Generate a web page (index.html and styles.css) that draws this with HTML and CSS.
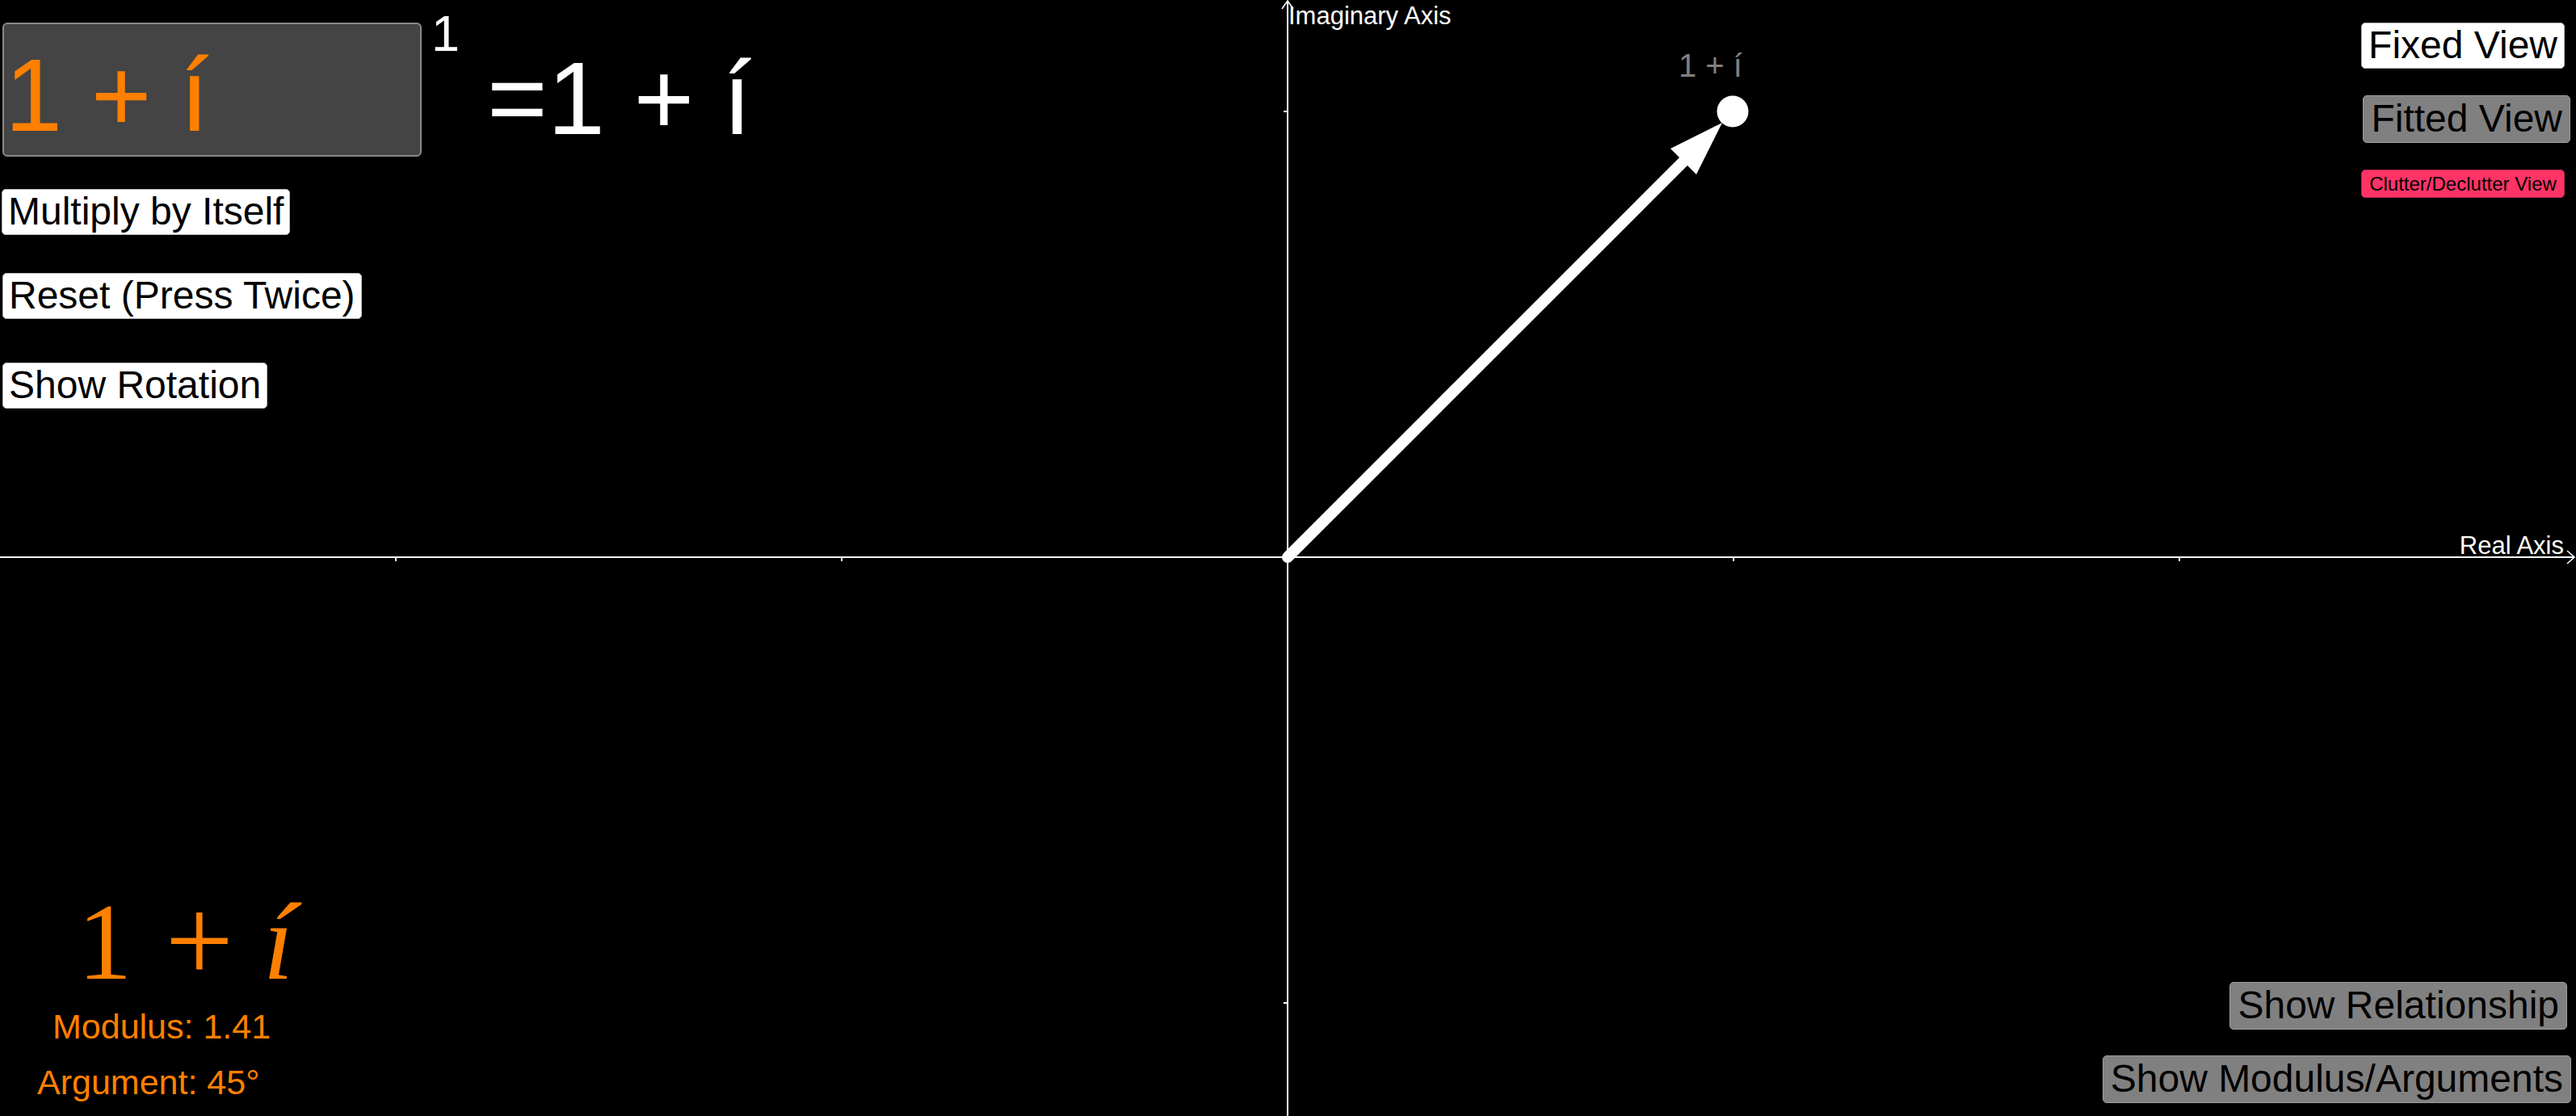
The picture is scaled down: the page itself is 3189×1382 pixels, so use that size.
FILE: index.html
```html
<!DOCTYPE html>
<html lang="en">
<head>
<meta charset="utf-8">
<title>Complex Multiplication</title>
<link rel="stylesheet" href="styles.css">
</head>
<body>
<main class="stage">
  <svg class="graph" viewBox="0 0 3189 1382" width="3189" height="1382" xmlns="http://www.w3.org/2000/svg">
    <g class="axes">
      <line x1="0" y1="690" x2="3187" y2="690"/>
      <polyline class="axis-head" points="3178,682 3187,690 3178,698"/>
      <line x1="1594" y1="1382" x2="1594" y2="1"/>
      <polyline class="axis-head" points="1587,11 1594,1 1601,11"/>
      <line x1="490" y1="690" x2="490" y2="695"/>
      <line x1="1042" y1="690" x2="1042" y2="695"/>
      <line x1="2146" y1="690" x2="2146" y2="695"/>
      <line x1="2698" y1="690" x2="2698" y2="695"/>
      <line x1="1589" y1="138" x2="1594" y2="138"/>
      <line x1="1589" y1="1242" x2="1594" y2="1242"/>
    </g>
    <text class="axis-label" x="1595" y="30">Imaginary Axis</text>
    <text class="axis-label" x="3174" y="686" text-anchor="end">Real Axis</text>
    <line class="vector" x1="1594" y1="690" x2="2090" y2="194"/>
    <polygon class="vector-head" points="2132,152 2068,184 2100,216"/>
    <circle class="point" cx="2145" cy="138" r="19.5"/>
    <text class="point-label" x="2078" y="95">1 + í</text>
  </svg>

  <section class="panel-left">
    <div class="expr-row">
      <div class="input-box">1 + í</div>
      <div class="power">1</div>
      <div class="result">=1 + í</div>
    </div>
    <button class="btn btn-white btn-multiply">Multiply by Itself</button>
    <button class="btn btn-white btn-reset">Reset (Press Twice)</button>
    <button class="btn btn-white btn-rotation">Show Rotation</button>
  </section>

  <section class="panel-right">
    <button class="btn btn-white btn-fixed">Fixed View</button>
    <button class="btn btn-gray btn-fitted">Fitted View</button>
    <button class="btn btn-pink">Clutter/Declutter View</button>
  </section>

  <section class="panel-bottom-left">
    <div class="math"><span class="num">1</span><span class="op">+</span><i class="imag">í</i></div>
    <div class="stat modulus">Modulus: 1.41</div>
    <div class="stat argument">Argument: 45°</div>
  </section>

  <section class="panel-bottom-right">
    <button class="btn btn-gray btn-relationship">Show Relationship</button>
    <button class="btn btn-gray btn-modarg">Show Modulus/Arguments</button>
  </section>
</main>
</body>
</html>
```
FILE: styles.css
```css
* { box-sizing: border-box; }

html, body {
  margin: 0;
  padding: 0;
  background: #000;
}

body {
  font-family: "Liberation Sans", Arial, sans-serif;
  color: #fff;
  overflow: hidden;
}

.stage {
  display: grid;
  width: 3189px;
  height: 1382px;
  grid-template-columns: 1fr 1fr;
  grid-template-rows: 1fr 1fr;
}

/* ---------- graph canvas ---------- */
.graph {
  grid-area: 1 / 1 / 3 / 3;
  display: block;
}

.axes line {
  stroke: #fff;
  stroke-width: 2;
}

.axis-head {
  fill: none;
  stroke: #fff;
  stroke-width: 1.6;
}

.axis-label {
  font-family: "Liberation Sans", Arial, sans-serif;
  font-size: 31px;
  fill: #fff;
}

.vector {
  stroke: #fff;
  stroke-width: 14;
  stroke-linecap: round;
}

.vector-head,
.point {
  fill: #fff;
}

.point-label {
  font-family: "Liberation Sans", Arial, sans-serif;
  font-size: 40px;
  fill: #808080;
}

/* ---------- buttons ---------- */
.btn {
  font-family: "Liberation Sans", Arial, sans-serif;
  font-size: 48px;
  line-height: 53px;
  color: #000;
  margin: 0;
  padding: 0 7px 2px;
  border: 1px solid #b8b8b8;
  border-radius: 5px;
  white-space: nowrap;
  cursor: pointer;
}

.btn-white { background: #fff; }

.btn-gray {
  background: #808080;
  border-color: #a0a0a0;
  padding: 1px 9px 3px;
}

.btn-pink {
  background: #ff3366;
  border-color: #b82a50;
  font-size: 24px;
  line-height: 27px;
  padding: 3px 0;
  width: 252px;
}

/* ---------- top-left panel ---------- */
.panel-left {
  grid-area: 1 / 1 / 2 / 2;
  align-self: start;
  justify-self: start;
  display: flex;
  flex-direction: column;
  align-items: flex-start;
}

.expr-row {
  display: flex;
  align-items: flex-start;
}

.input-box {
  margin: 28px 0 0 3px;
  width: 519px;
  height: 166px;
  border: 2px solid #8a8a8a;
  border-radius: 6px;
  background: #444;
  color: #ff8000;
  font-size: 128px;
  line-height: 1;
  padding: 24px 0 0 1px;
  white-space: nowrap;
}

.power {
  margin: 10px 0 0 12px;
  font-size: 63px;
  line-height: 1;
}

.result {
  margin: 58px 0 0 34px;
  font-size: 128px;
  line-height: 1;
  white-space: nowrap;
}

.btn-multiply { margin: 40px 0 0 2px; }
.btn-reset    { margin: 47px 0 0 3px; }
.btn-rotation { margin: 54px 0 0 3px; }

/* ---------- top-right panel ---------- */
.panel-right {
  grid-area: 1 / 2 / 2 / 3;
  align-self: start;
  justify-self: end;
  display: flex;
  flex-direction: column;
  align-items: flex-end;
}

.btn-fixed  { margin: 28px 14px 0 0; padding: 0 8px 2px; }
.btn-fitted { margin: 33px 7px 0 0; }
.btn-pink   { margin: 33px 14px 0 0; }

/* ---------- bottom-left panel ---------- */
.panel-bottom-left {
  grid-area: 2 / 1 / 3 / 2;
  align-self: end;
  justify-self: start;
  display: flex;
  flex-direction: column;
  align-items: flex-start;
  padding-bottom: 20px;
  color: #ff8000;
}

.math {
  margin-left: 96px;
  font-family: "Liberation Serif", "Times New Roman", serif;
  font-size: 135px;
  line-height: 135px;
  height: 135px;
  white-space: nowrap;
}

.math .op {
  display: inline-block;
  font-size: 150px;
  line-height: 0;
  vertical-align: -3px;
  margin-left: 41px;
}

.math .imag {
  margin-left: 37px;
}

.stat {
  font-size: 43px;
  line-height: 1;
  white-space: nowrap;
}

.modulus  { margin: 16px 0 0 65px; }
.argument { margin: 26px 0 0 46px; }

/* ---------- bottom-right panel ---------- */
.panel-bottom-right {
  grid-area: 2 / 2 / 3 / 3;
  align-self: end;
  justify-self: end;
  display: flex;
  flex-direction: column;
  align-items: flex-end;
  padding-bottom: 16px;
}

.btn-relationship { margin-right: 11px; }
.btn-modarg       { margin: 32px 6px 0 0; }
```
